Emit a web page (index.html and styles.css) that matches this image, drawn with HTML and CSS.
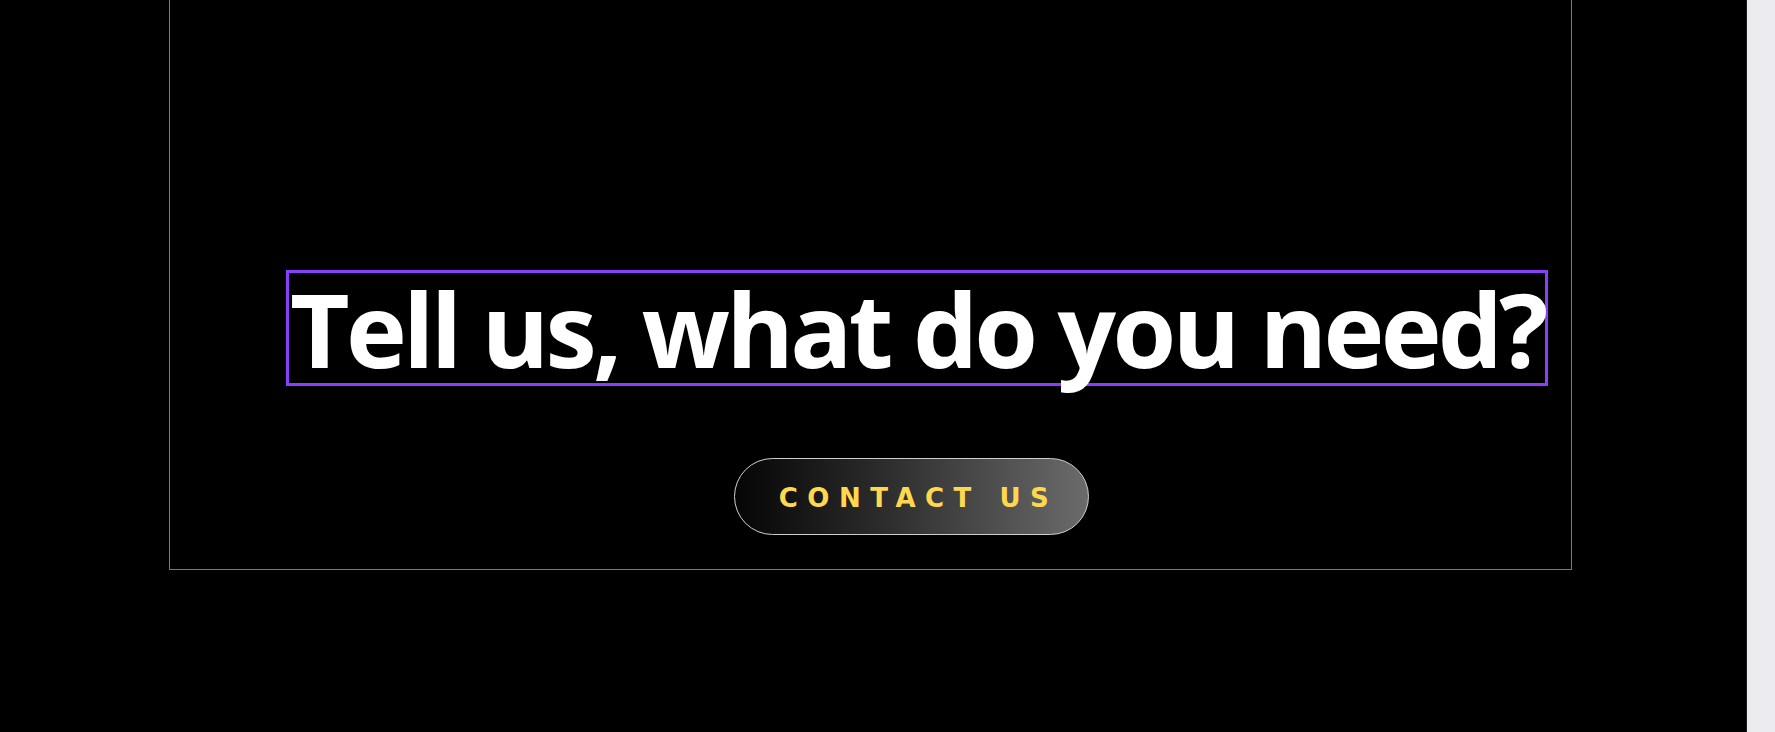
FILE: index.html
```html
<!DOCTYPE html>
<html lang="en">
<head>
<meta charset="utf-8">
<title>Tell us, what do you need?</title>
<link rel="stylesheet" href="styles.css">
</head>
<body>
  <main class="page">
    <section class="cta-box">
      <h1 class="cta-title">Tell us, what do you need?</h1>
      <a class="cta-button" href="#">CONTACT US</a>
    </section>
  </main>
  <aside class="side-strip"></aside>
</body>
</html>
```

FILE: styles.css
```css
html, body {
  margin: 0;
  padding: 0;
  height: 100%;
}
body {
  display: flex;
  width: 1775px;
  height: 732px;
  overflow: hidden;
  background: #000;
}
.page {
  width: 1746px;
  flex: none;
  background: #000;
}
.side-strip {
  flex: 1;
  background: #ebebf0;
  border-left: 1px solid #1c1c1c;
}
.cta-box {
  box-sizing: border-box;
  margin-left: 169px;
  width: 1403px;
  height: 570px;
  border: 1px solid #7a7a7a;
  border-top: none;
  padding-top: 270px;
  padding-left: 116px;
  display: flex;
  flex-direction: column;
  align-items: flex-start;
}
.cta-title {
  margin: 0;
  box-sizing: border-box;
  border: 3px solid #8b3dff;
  font-family: "Open Sans", "Noto Sans", sans-serif;
  font-weight: 700;
  font-size: 103px;
  line-height: 110px;
  color: #fff;
  white-space: nowrap;
  padding: 0 0 0 1px;
  letter-spacing: -3.7px;
}
.cta-button {
  box-sizing: border-box;
  margin-top: 72px;
  margin-left: 448px;
  width: 355px;
  height: 77px;
  border-radius: 39px;
  border: 1px solid #cfcfcf;
  background: linear-gradient(90deg, #050505 0%, #2a2a2a 40%, #6b6b6b 100%);
  display: flex;
  align-items: center;
  justify-content: center;
  padding-left: 14px;
  padding-top: 3px;
  font-family: "DejaVu Sans", "Liberation Sans", sans-serif;
  font-weight: 700;
  font-size: 26px;
  letter-spacing: 9.5px;
  color: #ffd84d;
  text-decoration: none;
}
```
